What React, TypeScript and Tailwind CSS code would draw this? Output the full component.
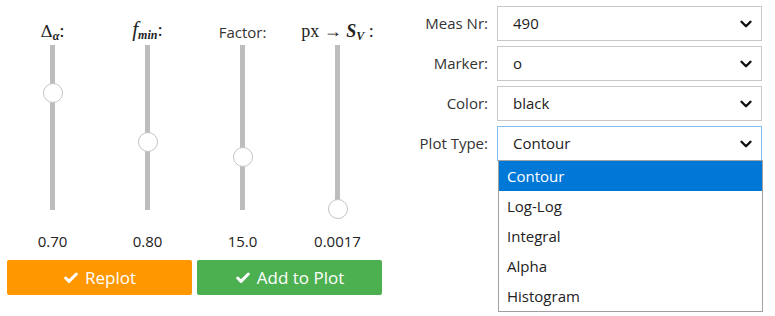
import { Check, ChevronDown } from "lucide-react";

const sliders = [
  { key: "da", value: "0.70", pos: 0.29 },
  { key: "fmin", value: "0.80", pos: 0.59 },
  { key: "factor", value: "15.0", pos: 0.68 },
  { key: "px", value: "0.0017", pos: 0.995 },
];

const SliderLabel = ({ k }: { k: string }) => {
  if (k === "da")
    return (
      <span className="font-['Liberation_Serif',serif] text-[19px] text-[#222]">
        <span className="font-['DejaVu_Serif',serif] text-[17px] not-italic">Δ</span>
        <sub className="text-[12px] italic font-bold">α</sub>:
      </span>
    );
  if (k === "fmin")
    return (
      <span className="font-['Liberation_Serif',serif] text-[19px] text-[#222]">
        <i className="text-[21px]">f</i>
        <sub className="text-[12px] italic font-bold">min</sub>:
      </span>
    );
  if (k === "factor") return <span className="text-[15px] text-[#333]">Factor:</span>;
  return (
    <span className="font-['Liberation_Serif',serif] text-[18px] text-[#222]">
      px → <b className="italic">S</b>
      <sub className="text-[12px] italic font-bold">V</sub> :
    </span>
  );
};

const VSlider = ({ pos }: { pos: number }) => {
  return (
    <div className="relative h-[165px] w-[5px] bg-[#bdbdbd]">
      <div
        className="absolute left-1/2 -translate-x-1/2 -translate-y-1/2 size-[20px] rounded-full bg-white border border-[#c4c4c4]"
        style={{ top: `${pos * 165}px` }}
      />
    </div>
  );
};

const SelectBox = ({ value, focused }: { value: string; focused?: boolean }) => {
  return (
    <div
      className={
        "flex items-center justify-between w-[265px] h-[35px] bg-white pl-[15px] pr-[6px] border " +
        (focused ? "border-[#85bdf0]" : "border-[#c8c8c8]")
      }
    >
      <span className="text-[15px] text-[#222]">{value}</span>
      <ChevronDown size={18} strokeWidth={3.2} className="text-[#111]" />
    </div>
  );
};

const rows = [
  { label: "Meas Nr:", value: "490" },
  { label: "Marker:", value: "o" },
  { label: "Color:", value: "black" },
  { label: "Plot Type:", value: "Contour" },
];

const options = ["Contour", "Log-Log", "Integral", "Alpha", "Histogram"];

export default function App() {
  return (
    <div className="w-[775px] h-[316px] bg-white flex font-['Open_Sans',sans-serif] text-[#333] overflow-hidden">
      <div className="w-[390px] pl-[5px] pt-[12px]">
        <div className="grid grid-cols-4 w-[380px]">
          {sliders.map((s) => (
            <div key={s.key} className="flex flex-col items-center">
              <div className="h-[28px] flex items-end leading-none">
                <SliderLabel k={s.key} />
              </div>
              <div className="mt-[5px]">
                <VSlider pos={s.pos} />
              </div>
              <div className="mt-[21px] text-[15px] leading-[20px] text-[#222]">{s.value}</div>
            </div>
          ))}
        </div>
        <div className="flex gap-[5px] mt-[9px] pl-[2px]">
          <button className="w-[185px] h-[35px] rounded-[2px] bg-[#ff9800] text-white text-[17px] flex items-center justify-center gap-[6px]">
            <Check size={16} strokeWidth={4.5} />
            Replot
          </button>
          <button className="w-[185px] h-[35px] rounded-[2px] bg-[#4caf50] text-white text-[17px] flex items-center justify-center gap-[6px]">
            <Check size={16} strokeWidth={4.5} />
            Add to Plot
          </button>
        </div>
      </div>
      <div className="pt-[6px] flex flex-col gap-[5px]">
        {rows.map((r, i) => (
          <div key={r.label} className="flex items-center gap-[9px]">
            <div className="w-[98px] text-right text-[15px] text-[#333]">{r.label}</div>
            <div className="relative">
              <SelectBox value={r.value} focused={i === 3} />
              {i === 3 && (
                <div className="absolute left-[1px] top-[34px] w-[265px] bg-white border border-[#a0a0a0] z-10">
                  {options.map((o, j) => (
                    <div
                      key={o}
                      className={
                        "h-[30px] flex items-center pl-[8px] text-[15px] " +
                        (j === 0 ? "bg-[#0078d7] text-white" : "text-[#222]")
                      }
                    >
                      {o}
                    </div>
                  ))}
                </div>
              )}
            </div>
          </div>
        ))}
      </div>
    </div>
  );
}
